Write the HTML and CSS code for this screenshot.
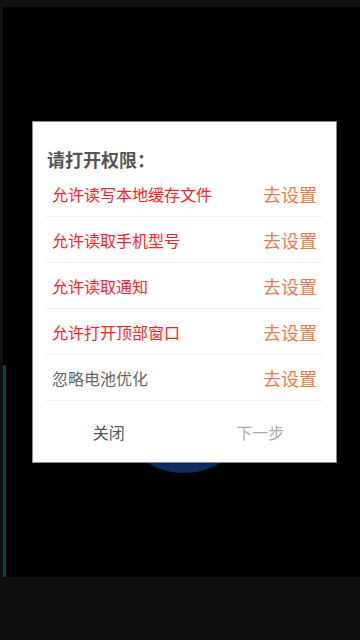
FILE: index.html
```html
<!DOCTYPE html>
<html lang="zh-CN">
<head>
  <meta charset="UTF-8">
  <title>权限设置</title>
  <link rel="stylesheet" href="styles.css">
</head>
<body>

  <div class="top-bar"></div>

  <div class="main">
    <div class="rail">
      <div class="rail-line"></div>
    </div>

    <div class="stage">
      <div class="blob"></div>

      <div class="dialog">
        <div class="dialog-body">
          <div class="dialog-title">请打开权限：</div>

          <div class="perm-row">
            <span class="perm-name need">允许读写本地缓存文件</span>
            <span class="perm-go">去设置</span>
          </div>
          <div class="perm-row">
            <span class="perm-name need">允许读取手机型号</span>
            <span class="perm-go">去设置</span>
          </div>
          <div class="perm-row">
            <span class="perm-name need">允许读取通知</span>
            <span class="perm-go">去设置</span>
          </div>
          <div class="perm-row">
            <span class="perm-name need">允许打开顶部窗口</span>
            <span class="perm-go">去设置</span>
          </div>
          <div class="perm-row">
            <span class="perm-name">忽略电池优化</span>
            <span class="perm-go">去设置</span>
          </div>
        </div>

        <div class="dialog-actions">
          <button class="action-btn">关闭</button>
          <button class="action-btn disabled">下一步</button>
        </div>
      </div>
    </div>
  </div>

  <div class="bottom-bar"></div>

</body>
</html>
```

FILE: styles.css
```css
html, body {
  height: 100%;
}

body {
  margin: 0;
  background: #000;
  font-family: "Noto Sans CJK SC", "Noto Sans", sans-serif;
  display: flex;
  flex-direction: column;
}

.top-bar {
  height: 7px;
  background: #111;
}

.main {
  flex: 1;
  display: flex;
}

.rail {
  width: 3px;
  border-left: 3px solid #111;
  display: flex;
  flex-direction: column;
}

.rail-line {
  margin-top: auto;
  height: 212px;
  background: #0b4650;
}

.stage {
  flex: 1;
  position: relative;
  padding: 114px 0 0 26px;
}

.blob {
  position: absolute;
  left: 108px;
  top: 326px;
  width: 140px;
  height: 140px;
  border-radius: 50%;
  background: #0f2d5c;
}

.dialog {
  position: relative;
  box-sizing: border-box;
  width: 305px;
  height: 342px;
  background: #fff;
  border: 1px solid #8c8c8c;
}

.dialog-body {
  padding: 25px 14px 0 13px;
}

.dialog-title {
  margin-left: 1px;
  height: 24px;
  line-height: 24px;
  font-size: 18px;
  font-weight: bold;
  color: #555;
}

.perm-row {
  height: 45px;
  border-bottom: 1px solid #eee;
  display: flex;
  align-items: center;
  justify-content: space-between;
  padding: 0 5px 0 6px;
}

.perm-name {
  font-size: 16px;
  color: #666;
}

.perm-name.need {
  color: #ff2323;
}

.perm-go {
  font-size: 18px;
  color: #f2794a;
}

.dialog-actions {
  display: flex;
  height: 61px;
}

.action-btn {
  flex: 1;
  background: none;
  border: none;
  padding: 0;
  font-family: inherit;
  font-size: 16px;
  color: #555;
}

.action-btn.disabled {
  color: #aaa;
}

.bottom-bar {
  height: 63px;
  background: #0e0e0e;
}
```
